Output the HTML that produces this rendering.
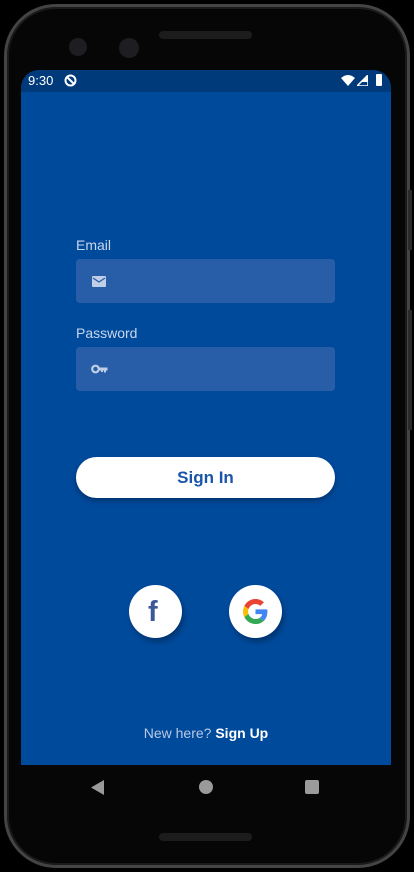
<!DOCTYPE html>
<html><head><style>
*{margin:0;padding:0;box-sizing:border-box}
body{width:414px;height:872px;background:#000;position:relative;overflow:hidden;font-family:"Liberation Sans",sans-serif}
.phone{position:absolute;left:4px;top:4px;width:406px;height:864px;border-radius:52px;background:#060606;border:3px solid #444;box-shadow:inset 0 0 0 2px #1a1a1a}
.screen{position:absolute;left:21px;top:70px;width:370px;height:695px;background:#004a9c;border-radius:18px 18px 0 0;overflow:hidden}
.status{position:absolute;left:0;top:0;width:370px;height:22px;background:#003a7a;color:#fff;font-size:13px}
.abs{position:absolute}
.label{position:absolute;left:55px;color:#c8d6ec;font-size:14px}
.input{position:absolute;left:55px;width:259px;height:44px;background:#285ea8;border-radius:4px}
.btn{position:absolute;left:55px;top:387px;width:259px;height:41px;background:#fff;border-radius:21px;color:#1a55aa;font-weight:bold;font-size:17px;text-align:center;line-height:42px;box-shadow:0 3px 6px rgba(0,0,0,.3)}
.circ{position:absolute;top:515px;width:53px;height:53px;border-radius:50%;background:#fff;box-shadow:2px 4px 6px rgba(0,0,0,.3)}
.grill{position:absolute;left:159px;width:93px;height:8px;border-radius:4px;background:#1c1c1c}
</style></head><body>
<div class="phone"></div>
<div class="grill" style="top:31px"></div>
<div class="grill" style="top:833px"></div>
<div class="abs" style="left:69px;top:38px;width:18px;height:18px;border-radius:50%;background:#1e1e22"></div>
<div class="abs" style="left:119px;top:38px;width:20px;height:20px;border-radius:50%;background:#1e1e22"></div>
<div class="abs" style="left:408px;top:190px;width:4px;height:60px;background:#2a2a2a"></div>
<div class="abs" style="left:408px;top:310px;width:4px;height:120px;background:#2a2a2a"></div>
<div class="screen">
 <div class="status">
  <span class="abs" style="left:7px;top:3px">9:30</span>
  <svg class="abs" style="left:43px;top:4px" width="13" height="13" viewBox="0 0 13 13"><circle cx="6.5" cy="6.5" r="5" fill="none" stroke="#fff" stroke-width="2"/><path d="M3 3l7 7" stroke="#fff" stroke-width="2"/></svg>
  <svg class="abs" style="left:320px;top:5px" width="14" height="11" viewBox="0 0 14 11"><path d="M0 3Q7-3 14 3L7 11Z" fill="#fff"/></svg>
  <svg class="abs" style="left:336px;top:5px" width="11" height="11" viewBox="0 0 11 11"><path d="M11 0V11H0Z" fill="none" stroke="#fff" stroke-width="1.5"/><path d="M11 0V7L4 7Z" fill="#fff"/></svg>
  <div class="abs" style="left:355px;top:4px;width:6px;height:12px;background:#fff;border-radius:1px"></div>
 </div>
 <div class="label" style="top:167px">Email</div>
 <div class="input" style="top:189px">
  <svg class="abs" style="left:16px;top:17px" width="14" height="11" viewBox="0 0 14 11"><rect width="14" height="11" rx="1" fill="#c0cfe6"/><path d="M1 2l6 4 6-4" fill="none" stroke="#285ea8" stroke-width="1.3"/></svg>
 </div>
 <div class="label" style="top:255px">Password</div>
 <div class="input" style="top:277px">
  <svg class="abs" style="left:15px;top:17px" width="17" height="10" viewBox="0 0 17 10"><circle cx="4.5" cy="5" r="3.3" fill="none" stroke="#c0cfe6" stroke-width="2.2"/><path d="M7.5 3.5H16.5V6.5H15V8.5H13V6.5H12V8H10V6.5H7.5Z" fill="#c0cfe6"/></svg>
 </div>
 <div class="btn">Sign In</div>
 <div class="circ" style="left:108px"><span class="abs" style="left:19px;top:10px;font-size:29px;font-weight:bold;color:#3b5998;line-height:34px">f</span></div>
 <div class="circ" style="left:208px">
  <svg class="abs" style="left:14px;top:14px" width="25" height="25" viewBox="0 0 48 48"><path fill="#EA4335" d="M24 9.5c3.5 0 6.7 1.2 9.2 3.6l6.9-6.9C35.9 2.4 30.5 0 24 0 14.6 0 6.6 5.4 2.6 13.3l8 6.2C12.5 13.7 17.8 9.5 24 9.5z"/><path fill="#4285F4" d="M46.9 24.5c0-1.600-.1-3.100-.4-4.500H24v9h12.9c-.6 3-2.300 5.500-4.800 7.200l7.700 6c4.500-4.200 7.100-10.300 7.100-17.700z"/><path fill="#FBBC05" d="M10.5 28.6c-.5-1.4-.8-3-.8-4.6s.3-3.2.8-4.6l-8-6.2C.9 16.5 0 20.1 0 24s.9 7.5 2.6 10.8l7.9-6.2z"/><path fill="#34A853" d="M24 48c6.5 0 11.9-2.1 15.9-5.8l-7.7-6c-2.2 1.5-5 2.3-8.2 2.3-6.2 0-11.5-4.2-13.4-9.9l-8 6.2C6.6 42.6 14.6 48 24 48z"/></svg>
 </div>
 <div class="abs" style="left:0;width:370px;top:655px;text-align:center;font-size:14px;color:#b8c8e4">New here? <b style="color:#fff">Sign Up</b></div>
</div>
<svg class="abs" style="left:91px;top:780px" width="14" height="15" viewBox="0 0 14 15"><path d="M0 7.5L13 0V15Z" fill="#9a9a9a"/></svg>
<div class="abs" style="left:199px;top:780px;width:14px;height:14px;border-radius:50%;background:#9a9a9a"></div>
<div class="abs" style="left:305px;top:780px;width:14px;height:14px;border-radius:2px;background:#9a9a9a"></div>
</body></html>
